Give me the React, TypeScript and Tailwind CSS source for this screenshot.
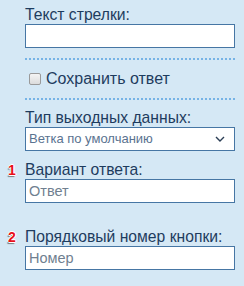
const FONT = { fontFamily: '"Liberation Sans", Arial, sans-serif' };

function Badge({ n }: { n: string }) {
  return (
    <span
      className="absolute -left-[17px] top-[2px] text-[14px] font-bold leading-none text-[#e8101a]"
      style={{ textShadow: '1px 0 0 #fff, -1px 0 0 #fff, 0 1px 0 #fff, 0 -1px 0 #fff, -1px 2px 1px #7a7a7a' }}
    >
      {n}
    </span>
  );
}

function Label({ text, badge }: { text: string; badge?: string }) {
  return (
    <div className="relative text-[15.7px] leading-[17px] text-[#1e3c5e] mb-px">
      {badge && <Badge n={badge} />}
      {text}
    </div>
  );
}

function Input({ placeholder }: { placeholder?: string }) {
  return (
    <input
      placeholder={placeholder}
      className="block w-full h-6 bg-white border border-[#4676a4] px-[3px] text-[14.5px] text-[#333] placeholder:text-[#707f90] outline-none"
      style={FONT}
    />
  );
}

function Dots() {
  return <div className="h-[2px] bg-[repeating-linear-gradient(90deg,#76b3e6_0_2px,transparent_2px_4px)]" />;
}

export default function App() {
  return (
    <div className="w-[244px] h-[286px] bg-[#d5e8f5] pl-[25px] pr-[9px] pt-[6px]" style={FONT}>
      {/* Arrow text */}
      <Label text="Текст стрелки:" />
      <Input />

      <div className="mt-[10px]">
        <Dots />
      </div>

      {/* Save answer */}
      <label className="flex items-center h-[38px] text-[16px] text-[#1e3c5e]">
        <input
          type="checkbox"
          className="appearance-none ml-1 mr-[5px] w-[12px] h-[12px] rounded-[2px] border border-[#9a9a9a] bg-[linear-gradient(#f4f4f4,#dcdcdc)]"
        />
        Сохранить ответ
      </label>

      <Dots />

      {/* Output type */}
      <div className="mt-[9px]">
        <Label text="Тип выходных данных:" />
        <div className="flex items-center justify-between h-6 bg-white border border-[#4676a4] pl-[3px] pr-[9px]">
          <span className="text-[13px] text-[#5a7390]">Ветка по умолчанию</span>
          <svg width="10" height="6" viewBox="0 0 10 6" fill="none">
            <path d="M1 1l4 4 4-4" stroke="#2b3e55" strokeWidth="1.4" />
          </svg>
        </div>
      </div>

      {/* Answer variant */}
      <div className="mt-[10px]">
        <Label text="Вариант ответа:" badge="1" />
        <Input placeholder="Ответ" />
      </div>

      {/* Button order number */}
      <div className="mt-[25px]">
        <Label text="Порядковый номер кнопки:" badge="2" />
        <Input placeholder="Номер" />
      </div>
    </div>
  );
}
